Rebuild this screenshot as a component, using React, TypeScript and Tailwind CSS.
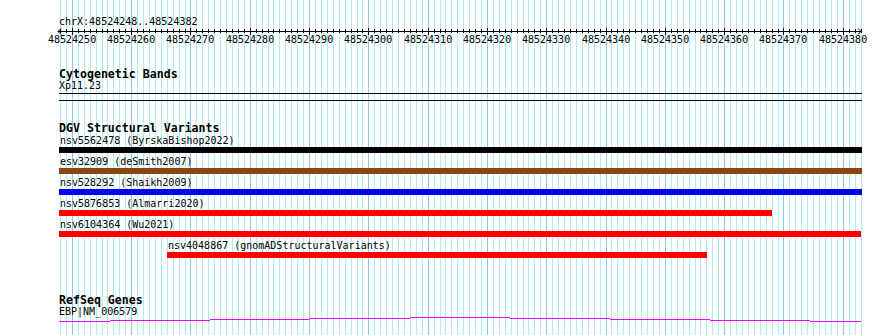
import React from 'react';

const BASES = 135;
const PX = 5.93;
const X0 = 60;
const bx = (i: number) => Math.round(X0 + i * PX);

const variants = [
  { label: 'nsv5562478 (ByrskaBishop2022)', color: '#000000', start: 59, end: 862 },
  { label: 'esv32909 (deSmith2007)', color: '#8b4513', start: 59, end: 862 },
  { label: 'nsv528292 (Shaikh2009)', color: '#0000ff', start: 59, end: 862 },
  { label: 'nsv5876853 (Almarri2020)', color: '#ff0000', start: 59, end: 772 },
  { label: 'nsv6104364 (Wu2021)', color: '#ff0000', start: 59, end: 861 },
  { label: 'nsv4048867 (gnomADStructuralVariants)', color: '#ff0000', start: 167, end: 707 },
];

// gene line steps: [x1, x2, row]
const geneSteps: [number, number, number][] = [
  [59, 110, 324],
  [110, 210, 323],
  [210, 310, 322],
  [310, 410, 321],
  [410, 510, 320],
  [510, 610, 321],
  [610, 710, 322],
  [710, 810, 323],
  [810, 861, 324],
];

function Grid() {
  const lines = [];
  for (let i = 0; i <= BASES; i++) {
    const major = i % 10 === 2;
    lines.push(
      <line
        key={i}
        x1={bx(i) + 0.5}
        x2={bx(i) + 0.5}
        y1={0}
        y2={335}
        stroke={major ? '#8cc8ec' : '#afeeee'}
        strokeWidth={1}
      />
    );
  }
  return (
    <svg className="absolute inset-0" width={890} height={335} shapeRendering="crispEdges">
      {lines}
    </svg>
  );
}

function Ruler() {
  // svg spans x 56..864, y 28..35
  const ox = 56;
  const ticks = [];
  for (let i = 0; i <= BASES; i++) {
    const major = i % 10 === 2;
    const x = bx(i) - ox + 0.5;
    ticks.push(<line key={i} x1={x} x2={x} y1={major ? 0 : 1} y2={major ? 7 : 5} stroke="#000" />);
  }
  const labels = [];
  for (let i = 2; i <= BASES; i += 10) {
    labels.push(
      <span
        key={i}
        className="absolute top-0 w-[48px] text-center"
        style={{ left: bx(i) - 59 - 24 }}
      >
        {48524248 + i}
      </span>
    );
  }
  return (
    <div>
      <div className="text-[10px] leading-[12px] h-[12px]">chrX:48524248..48524382</div>
      <svg className="-ml-[3px] block" width={808} height={7} shapeRendering="crispEdges">
        <line x1={2} x2={806} y1={3.5} y2={3.5} stroke="#000" />
        {ticks}
        <polyline points="5,0.5 2,3.5 5,6.5" fill="none" stroke="#000" shapeRendering="auto" />
        <polyline points="802,0.5 805,3.5 802,6.5" fill="none" stroke="#000" shapeRendering="auto" />
      </svg>
      <div className="relative h-[10px] text-[10px] leading-[10px]">{labels}</div>
    </div>
  );
}

export default function App() {
  return (
    <div className="relative w-[890px] h-[335px] bg-white overflow-hidden text-black font-['DejaVu_Sans_Mono',monospace]">
      <Grid />
      <div className="relative pl-[59px] w-[862px] pt-[16px]">
        <Ruler />

        {/* Cytogenetic Bands */}
        <div className="mt-[23px] text-[11.6px] leading-[13px] font-bold">Cytogenetic Bands</div>
        <div className="text-[10px] leading-[10px]">Xp11.23</div>
        <div className="mt-[2px] h-[8px] border-y border-black" />

        {/* DGV Structural Variants */}
        <div className="mt-[20px] text-[11.6px] leading-[14px] font-bold">DGV Structural Variants</div>
        {variants.map((v) => (
          <div key={v.label} className="mb-[3px]">
            <div className="text-[10px] leading-[12px] whitespace-nowrap pl-px" style={{ marginLeft: v.start - 59 }}>
              {v.label}
            </div>
            <div className="h-[6px]" style={{ marginLeft: v.start - 59, width: v.end - v.start, background: v.color }} />
          </div>
        ))}

        {/* RefSeq Genes */}
        <div className="mt-[36px] text-[11.6px] leading-[13px] font-bold">RefSeq Genes</div>
        <div className="text-[10px] leading-[10px]">EBP|NM_006579</div>
        <svg className="block" width={803} height={8} shapeRendering="crispEdges">
          {geneSteps.map(([a, b, r], k) => (
            <line key={k} x1={a - 59} x2={b - 59} y1={r - 320 + 0.5} y2={r - 320 + 0.5} stroke="#ff00ff" />
          ))}
        </svg>
      </div>
    </div>
  );
}
